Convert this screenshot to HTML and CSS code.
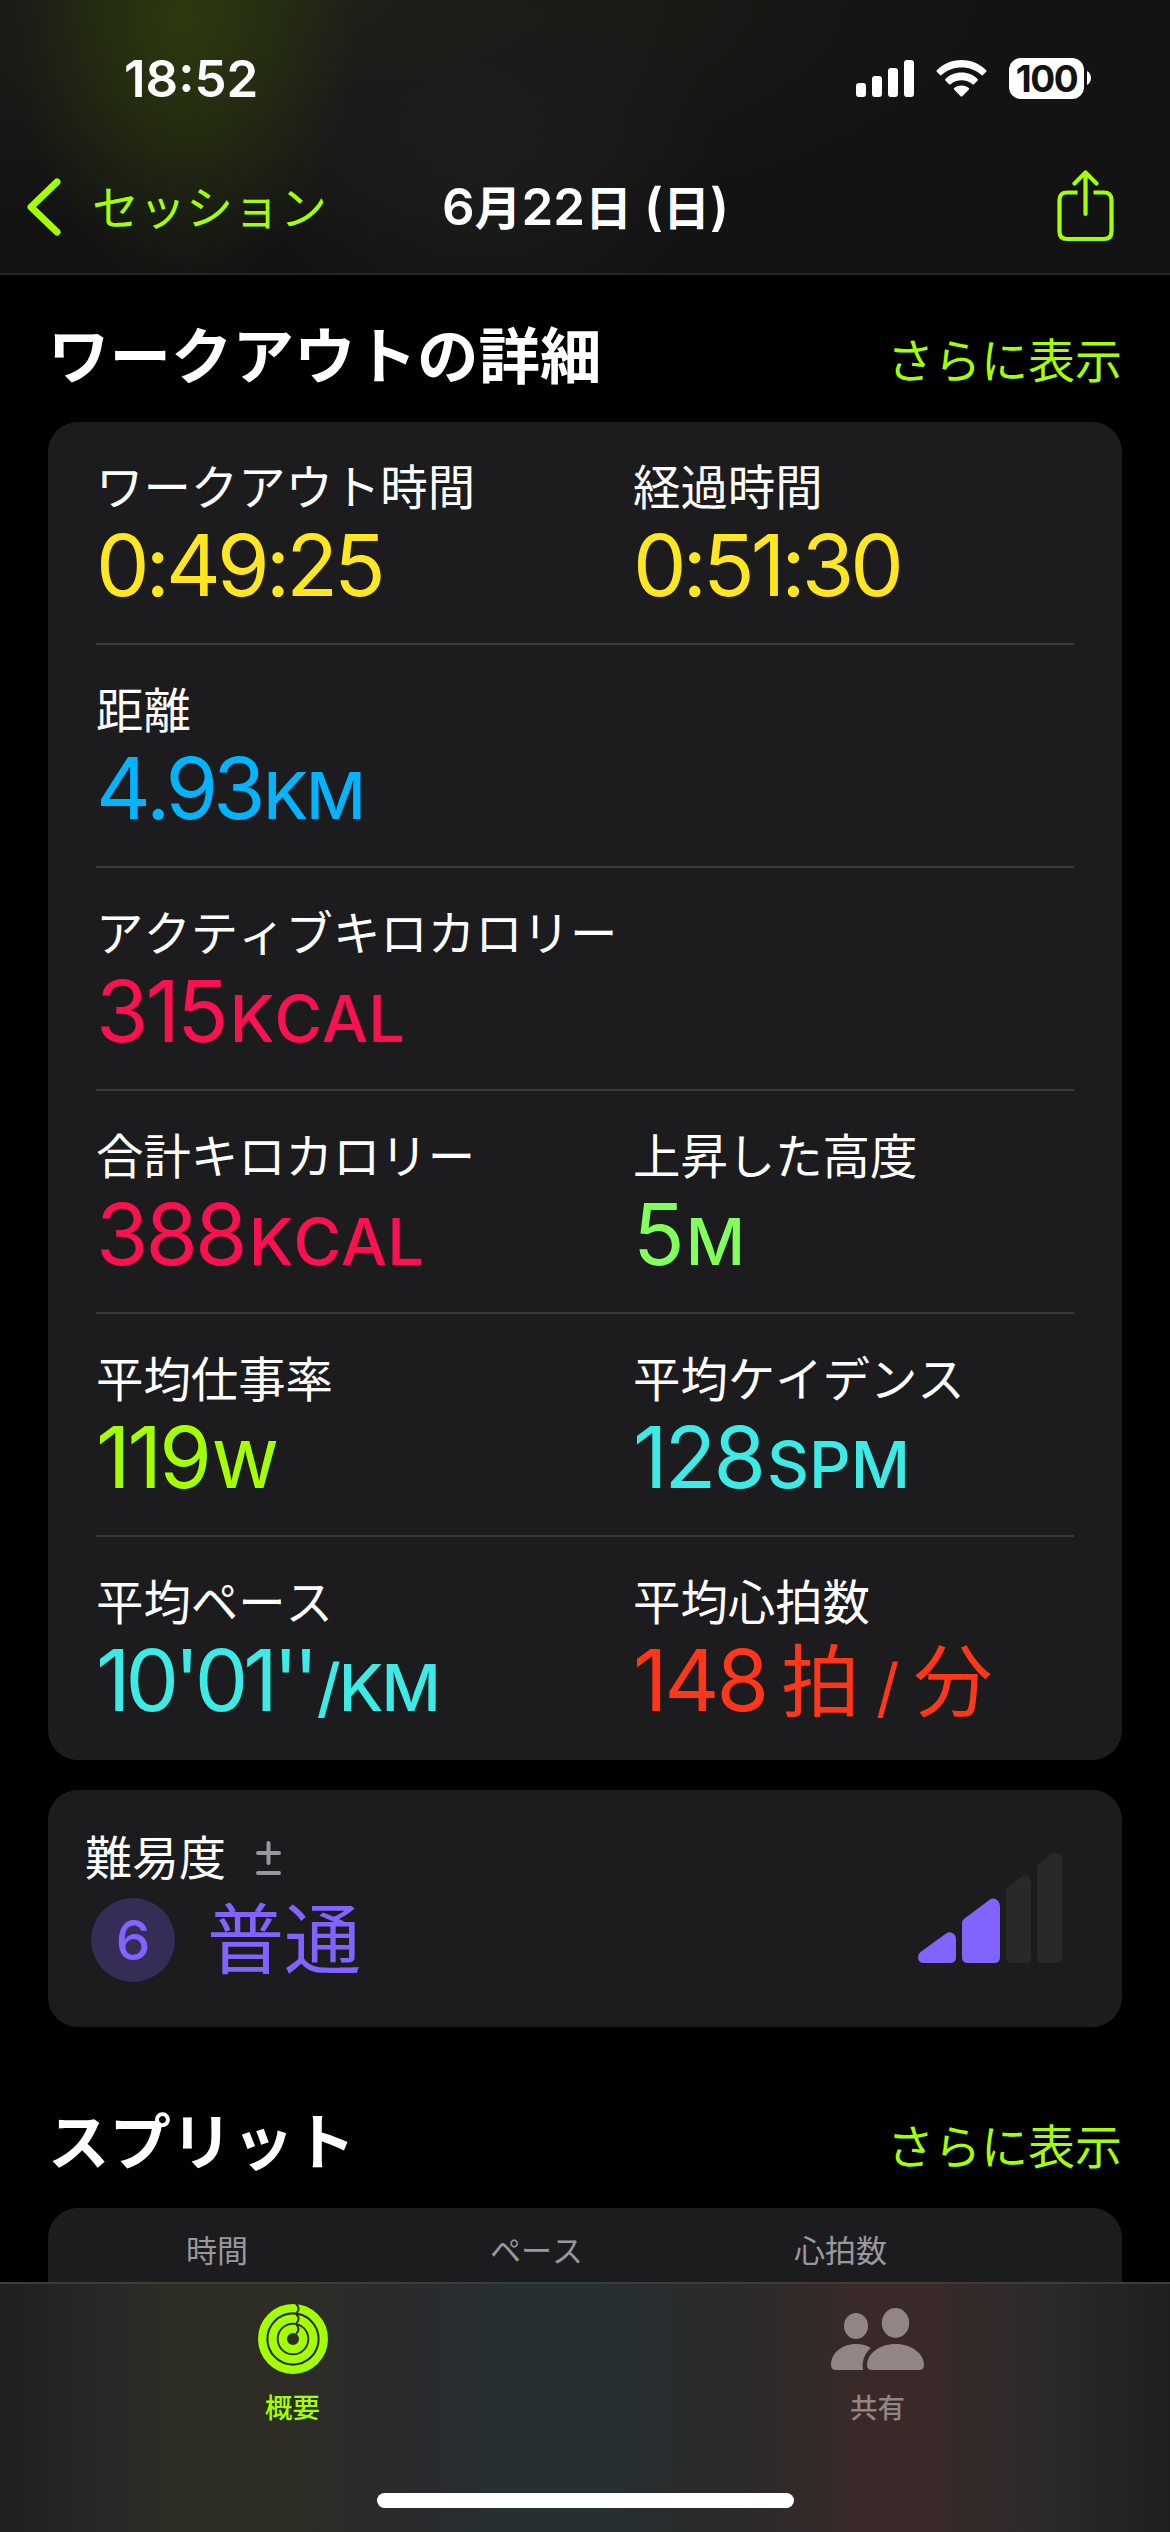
FILE: index.html
```
<!DOCTYPE html>
<html lang="ja">
<head>
  <meta charset="UTF-8">
  <meta name="viewport" content="width=device-width, initial-scale=1.0">
  <title>ワークアウトの詳細</title>
  <link rel="stylesheet" href="styles.css">
</head>
<body>
  <header class="header">
    <div class="status">
      <span class="time">18:52</span>
      <div class="status-icons">
        <svg width="58" height="37" viewBox="0 0 58 37" fill="#fff">
          <rect x="0" y="23" width="10" height="14" rx="3"/>
          <rect x="16" y="16" width="10" height="21" rx="3"/>
          <rect x="32" y="8" width="10" height="29" rx="3"/>
          <rect x="48" y="0" width="10" height="37" rx="3"/>
        </svg>
        <svg class="wifi" width="51" height="37" viewBox="0 0 51 37" fill="#fff">
          <path d="M25.500 0C35.500 0 44 4 50.200 10.200Q51 11 50.200 11.800L47 15Q46.200 15.800 45.400 15C40 10.200 33.200 7.600 25.500 7.600S11 10.200 5.600 15Q4.800 15.800 4 15L.8 11.800Q0 11 .8 10.200C7 4 15.500 0 25.500 0Z"/>
          <path d="M25.500 12.600C32 12.600 37.400 15 41.600 19Q42.400 19.800 41.600 20.600L38 24.200Q37.200 25 36.400 24.200C33.400 21.600 29.800 20.200 25.500 20.200S17.600 21.600 14.600 24.200Q13.800 25 13 24.200L9.400 20.600Q8.600 19.800 9.400 19C13.600 15 19 12.600 25.500 12.600Z"/>
          <path d="M25.500 25.400C28.500 25.400 31 26.400 32.800 28Q33.700 28.800 32.900 29.600L26.400 36.200Q25.500 37 24.600 36.200L18.100 29.600Q17.300 28.800 18.200 28C20 26.400 22.500 25.400 25.500 25.400Z"/>
        </svg>
        <div class="battery">100</div>
        <svg class="battery-cap" width="4" height="14" viewBox="0 0 4 14" fill="#fff"><path d="M0 0C5.300 2.500 5.300 11.500 0 14Z"/></svg>
      </div>
    </div>
    <nav class="nav">
      <a class="back">
        <svg width="34" height="58" viewBox="0 0 34 58" fill="none" stroke="#a4ff00" stroke-width="7" stroke-linecap="round" stroke-linejoin="round"><path d="M30 4L4 29L30 54"/></svg>
        <span>セッション</span>
      </a>
      <h1 class="nav-title"><b>6</b>月<b>22</b>日<b class="paren">(</b>日<b>)</b></h1>
      <a class="share">
        <svg width="58" height="72" viewBox="0 0 58 72" fill="none" stroke="#a4ff00" stroke-width="4.200" stroke-linecap="round" stroke-linejoin="round">
          <path stroke-linecap="butt" d="M20.500 22.500H10Q2.500 22.500 2.500 30V61.500Q2.500 69 10 69H47Q54.500 69 54.500 61.500V30Q54.500 22.500 47 22.500H36.500"/>
          <path d="M28.500 44V3M17.500 13.500L28.500 2.500L39.500 13.500"/>
        </svg>
      </a>
    </nav>
  </header>

  <main class="content">
    <div class="section-head">
      <h2>ワークアウトの詳細</h2>
      <a>さらに表示</a>
    </div>
    <section class="card details">
      <div class="row">
        <div class="metric yellow"><p>ワークアウト時間</p><div class="value clock">0:49:25</div></div>
        <div class="metric yellow"><p>経過時間</p><div class="value clock">0:51:30</div></div>
      </div>
      <div class="row">
        <div class="metric blue"><p>距離</p><div class="value pace">4.93<small class="narrow">KM</small></div></div>
      </div>
      <div class="row">
        <div class="metric pink"><p>アクティブキロカロリー</p><div class="value">315<small>KCAL</small></div></div>
      </div>
      <div class="row">
        <div class="metric pink"><p>合計キロカロリー</p><div class="value">388<small>KCAL</small></div></div>
        <div class="metric green"><p>上昇した高度</p><div class="value">5<small>M</small></div></div>
      </div>
      <div class="row">
        <div class="metric lime"><p>平均仕事率</p><div class="value">119<small>W</small></div></div>
        <div class="metric cyan"><p>平均ケイデンス</p><div class="value">128<small>SPM</small></div></div>
      </div>
      <div class="row">
        <div class="metric cyan"><p>平均ペース</p><div class="value pace">10'01''<small class="narrow">/KM</small></div></div>
        <div class="metric red"><p>平均心拍数</p><div class="value">148<span class="bpm">拍<small>/</small>分</span></div></div>
      </div>
    </section>

    <section class="card effort">
      <div>
        <div class="effort-label">
          難易度
          <svg width="25" height="34" viewBox="0 0 25 34" fill="none" stroke="#98989f" stroke-width="4" stroke-linecap="round"><path d="M12.500 2V22M2 12H23M2 32H23"/></svg>
        </div>
        <div class="effort-value"><span class="level">6</span>普通</div>
      </div>
      <svg class="effort-bars" width="144" height="112" viewBox="0 0 144 112">
        <path fill="#8263ff" d="M2.500 100L28 81.500Q32 79 36 82Q38 84 38 87V105Q38 111 32 111H6Q0 111 0 105Q0 102 2.500 100Z"/>
        <path fill="#8263ff" d="M46.500 66.500L72 47.500Q76 45 80 49Q82 51 82 54V105Q82 111 76 111H50Q44 111 44 105V71Q44 68.500 46.500 66.500Z"/>
        <path fill="#29292b" d="M90.500 34.500L104 24.500Q108 22.500 111.500 26Q113 28 113 31V105Q113 111 107 111H94Q88 111 88 105V40Q88 36.500 90.500 34.500Z"/>
        <path fill="#29292b" d="M121.500 11L134 1.500Q138-.500 142 2.500Q144 4.500 144 7V105Q144 111 138 111H125Q119 111 119 105V16Q119 13 121.500 11Z"/>
      </svg>
    </section>

    <div class="section-head splits-head">
      <h2>スプリット</h2>
      <a>さらに表示</a>
    </div>
    <section class="card splits">
      <span>時間</span>
      <span>ペース</span>
      <span>心拍数</span>
    </section>
  </main>

  <footer class="tabbar">
    <div class="tabs">
      <a class="tab active">
        <svg width="70" height="70" viewBox="0 0 70 70" fill="none">
          <g stroke="#a4ff00">
            <circle cx="35" cy="35" r="30.800" stroke-width="8.300"/>
            <circle cx="35" cy="35" r="20.400" stroke-width="8.300"/>
            <circle cx="35" cy="35" r="10.200" stroke-width="8.300"/>
          </g>
          <path stroke="#2d2d26" stroke-width="2" d="M38 0Q43 4.500 38.500 9M38 10Q43 14.500 38.500 19M38 20Q43 25 38 30"/>
        </svg>
        <span>概要</span>
      </a>
      <a class="tab">
        <svg width="94" height="70" viewBox="0 0 94 70" fill="#928684">
          <ellipse cx="25" cy="22" rx="12" ry="13"/>
          <ellipse cx="64.500" cy="19" rx="13.700" ry="15"/>
          <path d="M25 40C31 40 36 41.500 39.800 44C34 49 30.500 57 32 66H5Q0 66 0 61C0 49 11 40 25 40Z"/>
          <path d="M64.500 40C81 40 93 50 93 61Q93 66 88 66H41Q36 66 36 61C36 50 48 40 64.500 40Z"/>
        </svg>
        <span>共有</span>
      </a>
    </div>
    <div class="home-bar"></div>
  </footer>
</body>
</html>
```
FILE: styles.css
```
* {
  box-sizing: border-box;
}
body {
  margin: 0;
  width: 1170px;
  height: 2532px;
  display: flex;
  flex-direction: column;
  overflow: hidden;
  background: #000;
  color: #fff;
  font-family: Inter, 'Noto Sans CJK JP', sans-serif;
  font-kerning: none;
}
h1, h2, p {
  margin: 0;
}
svg {
  display: block;
  flex-shrink: 0;
}

/* header */
.header {
  height: 275px;
  flex-shrink: 0;
  border-bottom: 2px solid #262627;
  background:
    radial-gradient(ellipse 170px 270px at 185px 20px, rgba(56, 76, 8, 0.6), rgba(56, 76, 8, 0)),
    radial-gradient(ellipse 240px 190px at 480px 150px, #1d1d1e, rgba(29, 29, 30, 0)),
    radial-gradient(ellipse 700px 240px at 300px 0, #1e2218, rgba(30, 34, 24, 0)),
    #131313;
}
.status {
  height: 156px;
  padding: 0 79px 0 124px;
  display: flex;
  align-items: center;
  justify-content: space-between;
}
.time {
  font-size: 51px;
  font-weight: 600;
}
.status-icons {
  display: flex;
  align-items: center;
}
.wifi {
  margin: 0 22px;
}
.battery {
  width: 75px;
  height: 41px;
  border-radius: 12px;
  background: #fff;
  color: #131313;
  font-size: 37px;
  font-weight: 700;
  line-height: 41px;
  letter-spacing: -1.500px;
  text-align: center;
}
.battery-cap {
  margin-left: 3px;
}
.nav {
  height: 102px;
  padding: 0 55px 0 27px;
  display: grid;
  grid-template-columns: 1fr auto 1fr;
  align-items: center;
  font-size: 47px;
}
.back {
  display: flex;
  align-items: center;
  gap: 31px;
  color: #a4ff00;
}
.back span {
  margin-top: -6px;
}
.nav-title {
  margin: -6px 0 0 29px;
  font-size: 47px;
  font-weight: 700;
  white-space: nowrap;
}
.nav-title b {
  font-size: 51px;
  font-weight: 600;
}
.nav-title .paren {
  margin-left: 12px;
}
.share {
  justify-self: end;
  margin-top: -2px;
}

/* content */
.content {
  flex: 1;
  min-height: 0;
  overflow: hidden;
  padding: 0 48px;
}
.section-head {
  height: 147px;
  display: flex;
  justify-content: space-between;
  align-items: center;
}
.section-head h2 {
  margin-top: 17px;
  font-size: 61.500px;
  font-weight: 700;
  line-height: 80px;
}
.section-head a {
  margin-top: 25px;
  color: #a4ff00;
  font-size: 47px;
  line-height: 60px;
}
.card {
  background: #1c1c1e;
  border-radius: 30px;
}
.details {
  height: 1338px;
  padding: 0 48px;
}
.row {
  height: 223px;
  padding-top: 36px;
  display: grid;
  grid-template-columns: 537px 1fr;
  border-bottom: 2px solid #39393b;
}
.row:last-child {
  border-bottom: none;
}
.metric p {
  color: #fff;
  font-size: 47.400px;
  line-height: 60px;
}
.value {
  margin-top: 1px;
  font-size: 85px;
  line-height: 94px;
  letter-spacing: -3px;
  white-space: nowrap;
}
.value.clock {
  letter-spacing: -4px;
}
.value.pace {
  letter-spacing: -5px;
}
.value small {
  margin-left: 4px;
  font-size: 65px;
  font-weight: 500;
  letter-spacing: 0;
}
.value small.narrow {
  margin-left: 3px;
  letter-spacing: -2px;
}
.value .bpm {
  margin-left: 15px;
  font-size: 79px;
  line-height: 1;
}
.value .bpm small {
  margin: 0 14px 0 19px;
  font-weight: 400;
}
.yellow { color: #ffe620; }
.blue { color: #00b4ff; }
.pink { color: #fa114f; }
.green { color: #83ff5c; }
.lime { color: #a4ff00; }
.cyan { color: #3ceae6; }
.red { color: #ff3719; }

.effort {
  height: 237px;
  margin-top: 30px;
  padding: 38px 60px 0 37px;
  display: flex;
  justify-content: space-between;
}
.effort-label {
  display: flex;
  align-items: center;
  gap: 30px;
  font-size: 47px;
  line-height: 60px;
}
.effort-value {
  display: flex;
  align-items: center;
  gap: 32px;
  margin: 10px 0 0 6px;
  color: #8263ff;
  font-size: 77px;
  line-height: 84px;
}
.level {
  width: 84px;
  height: 84px;
  border-radius: 50%;
  background: #352d56;
  font-size: 55px;
  font-weight: 500;
  text-align: center;
}
.effort-bars {
  margin-top: 24px;
}
.splits-head {
  height: 181px;
}
.splits-head h2 {
  margin-top: 50px;
}
.splits-head a {
  margin-top: 59px;
}
.splits {
  height: 120px;
  padding: 27px 0 0 138px;
  display: grid;
  grid-template-columns: 304px 304px 1fr;
  color: #98989f;
  font-size: 31px;
  line-height: 32px;
}

/* tab bar */
.tabbar {
  height: 250px;
  flex-shrink: 0;
  border-top: 2px solid #3d3d3f;
  background: linear-gradient(90deg, #1e1f1f 0, #262727 90px, #2d2d26 170px, #2d2d26 290px, #2a2a2b 390px, #262f31 500px, #262f31 600px, #2b2a2a 740px, #392a29 860px, #392a29 930px, #2a2929 1060px, #1e1f1f 1170px);
}
.tabs {
  height: 209px;
  padding-top: 20px;
  display: grid;
  grid-template-columns: 1fr 1fr;
}
.tab {
  display: flex;
  flex-direction: column;
  align-items: center;
  gap: 14px;
  color: #928684;
  font-size: 27.500px;
  font-weight: 500;
  line-height: 40px;
}
.tab.active {
  color: #a4ff00;
}
.home-bar {
  width: 417px;
  height: 15px;
  margin: 0 auto;
  border-radius: 8px;
  background: #fff;
}
```
